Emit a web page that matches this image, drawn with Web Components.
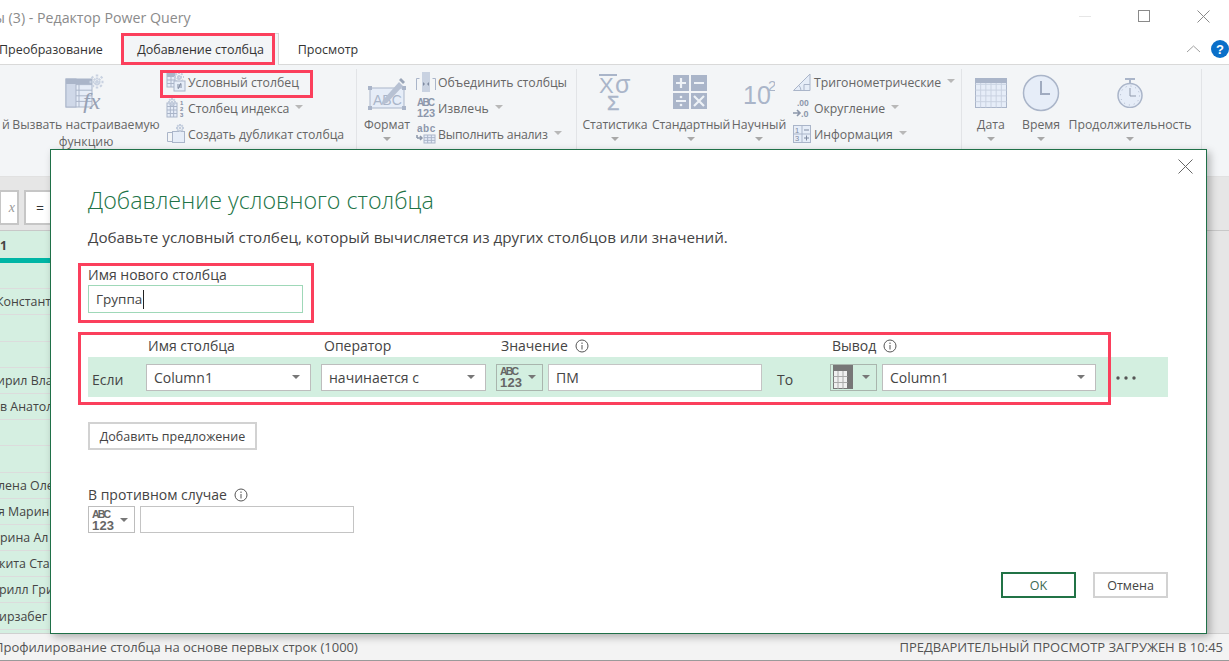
<!DOCTYPE html>
<html lang="ru"><head><meta charset="utf-8"><title>Редактор Power Query</title>
<style>
html,body{margin:0;padding:0;width:1229px;height:661px;overflow:hidden;background:#fff}
body{font-family:"Open Sans","Noto Sans",sans-serif}
</style></head><body>
<pq-app>
  <pq-titlebar>ы (3) - Редактор Power Query</pq-titlebar>
  <pq-tabs>
    <pq-tab style="width:122px;justify-content:flex-start;text-indent:-1px">Преобразование</pq-tab>
    <pq-tab active style="width:157px">Добавление столбца</pq-tab>
    <pq-tab style="width:98px">Просмотр</pq-tab>
  </pq-tabs>
  <pq-ribbon>
    <pq-group style="width:357px;padding-left:0">
      <pq-large style="width:12px;justify-content:flex-start" noicon>й</pq-large>
      <pq-large style="width:148px" icon="fx">Вызвать настраиваемую функцию</pq-large>
      <pq-col style="margin-left:4px">
        <pq-small icon="cond">Условный столбец</pq-small>
        <pq-small icon="index" caret>Столбец индекса</pq-small>
        <pq-small icon="dup">Создать дубликат столбца</pq-small>
      </pq-col>
    </pq-group>
    <pq-group style="width:220px;padding-left:5px">
      <pq-large style="width:50px" icon="format" caret>Формат</pq-large>
      <pq-col style="margin-left:2px">
        <pq-small icon="merge">Объединить столбцы</pq-small>
        <pq-small icon="extract" caret>Извлечь</pq-small>
        <pq-small icon="parse" caret style="letter-spacing:-.22px">Выполнить анализ</pq-small>
      </pq-col>
    </pq-group>
    <pq-group style="width:385px;padding-left:5px">
      <pq-large style="width:66px;letter-spacing:-.15px" icon="stat" caret>Статистика</pq-large>
      <pq-large style="width:82px;margin-left:2px;letter-spacing:-.18px" icon="calc" caret>Стандартный</pq-large>
      <pq-large style="width:58px;margin-left:-2px" icon="sci" caret>Научный</pq-large>
      <pq-col style="margin-left:2px">
        <pq-small icon="trig" caret style="letter-spacing:-.05px">Тригонометрические</pq-small>
        <pq-small icon="round" caret>Округление</pq-small>
        <pq-small icon="info" caret>Информация</pq-small>
      </pq-col>
    </pq-group>
    <pq-group style="width:240px;padding-left:8px">
      <pq-large style="width:42px" icon="date" caret>Дата</pq-large>
      <pq-large style="width:50px;margin-left:4px" icon="time" caret>Время</pq-large>
      <pq-large style="width:124px;margin-left:2px" icon="dur" caret>Продолжительность</pq-large>
    </pq-group>
  </pq-ribbon>
  <pq-formula></pq-formula>
  <pq-grid>
    <pq-row head>1</pq-row>
    <pq-row></pq-row>
    <pq-row><span style="margin-left:-4px">Константин</span></pq-row>
    <pq-row></pq-row>
    <pq-row></pq-row>
    <pq-row><span style="margin-left:-3px">ирил Влад</span></pq-row>
    <pq-row>в Анатолий</pq-row>
    <pq-row></pq-row>
    <pq-row></pq-row>
    <pq-row><span style="margin-left:-2px">лена Олег</span></pq-row>
    <pq-row><span style="margin-left:-2px">я Марина</span></pq-row>
    <pq-row>рина Ал</pq-row>
    <pq-row><span style="margin-left:-1px">кита Стан</span></pq-row>
    <pq-row><span style="margin-left:-1px">рилл Гри</span></pq-row>
    <pq-row><span style="margin-left:-1px">ирзабег С</span></pq-row>
  </pq-grid>
  <pq-status>
    <span>Профилирование столбца на основе первых строк (1000)</span>
    <span slot="right">ПРЕДВАРИТЕЛЬНЫЙ ПРОСМОТР ЗАГРУЖЕН В 10:45</span>
  </pq-status>

  <pq-dialog>
    <pq-heading>Добавление условного столбца</pq-heading>
    <pq-text>Добавьте условный столбец, который вычисляется из других столбцов или значений.</pq-text>
    <pq-newcol label="Имя нового столбца" value="Группа"></pq-newcol>
    <pq-clause></pq-clause>
    <pq-button style="width:169px;margin-top:25px">Добавить предложение</pq-button>
    <pq-else></pq-else>
    <pq-footer>
      <pq-button primary style="width:75px;height:26px">OK</pq-button>
      <pq-button style="width:75px;height:26px">Отмена</pq-button>
    </pq-footer>
  </pq-dialog>

  <pq-mark style="left:121px;top:33px;width:148px;height:26px"></pq-mark>
  <pq-mark style="left:160px;top:70px;width:147px;height:22px"></pq-mark>
  <pq-mark style="left:78px;top:263px;width:230px;height:54px"></pq-mark>
  <pq-mark style="left:78px;top:332px;width:1027px;height:67px"></pq-mark>
</pq-app>
<script>
const B='#aab5c9',L='#e6edf8',M='#cfd8e8',G='#8f99ab';
const tbl=(x,y,w,h,c,r,ln=B)=>{let s=`<rect x="${x}" y="${y}" width="${w}" height="${h}" fill="${L}" stroke="${B}"/>`;for(let i=1;i<c;i++){const p=x+i*w/c;s+=`<path d="M${p} ${y}V${y+h}" stroke="${ln}"/>`}for(let i=1;i<r;i++){const p=y+i*h/r;s+=`<path d="M${x} ${p}H${x+w}" stroke="${ln}"/>`}return s};
const spark=(cx,cy,r,c='#c3cddd',sw=2)=>{let s='';for(let a=0;a<4;a++){const t=a*Math.PI/4,dx=(r*Math.cos(t)).toFixed(1),dy=(r*Math.sin(t)).toFixed(1);s+=`<path d="M${cx-dx} ${cy-dy}L${cx+ +dx} ${cy+ +dy}" stroke="${c}" stroke-width="${sw}" stroke-dasharray="2 1"/>`}return s};
const t=(x,y,sz,s,ex='')=>`<text x="${x}" y="${y}" font-size="${sz}" font-family="'Liberation Sans',sans-serif" ${ex}>${s}</text>`;
const ICONS={
 fx:[44,40,`${tbl(2,6,26,28,2,5)}<rect x="2" y="6" width="10" height="28" fill="${M}" stroke="${B}"/><rect x="2" y="6" width="26" height="5" fill="${B}"/>${spark(33,9,7.5,'#c9d2e1',2.5)}<text x="19" y="36" font-size="24" font-style="italic" font-family="'Liberation Serif',serif" fill="#97a1b4">fx</text>`],
 format:[38,36,`<rect x="2" y="13" width="34" height="20" fill="${L}" stroke="${B}"/><g fill="${B}"><rect x="0" y="11" width="4" height="4"/><rect x="34" y="11" width="4" height="4"/><rect x="0" y="31" width="4" height="4"/><rect x="34" y="31" width="4" height="4"/></g>${t(5,30,14,'ABC',`fill="${B}"`)}<path d="M15 25L31 7l4 4-16 17-6 2z" fill="#b7c1d3"/><path d="M31 5l2-2 4 4-2 2z" fill="#9aa5b8"/>`],
 cond:[20,20,`${tbl(1,1,8,14,2,4)}<rect x="1" y="1" width="8" height="3" fill="${B}"/>${spark(13,5,5)}<rect x="8" y="9" width="11" height="10" fill="${L}" stroke="${B}"/><path d="M11 13h5M11 15h5M15 11l-3 6" stroke="#7f8aa0" fill="none"/>`],
 index:[20,20,`${tbl(1,5,10,14,3,4)}${spark(6,4,4)}<g font-size="6" font-family="'Liberation Sans',sans-serif" fill="#7f8aa0" font-weight="bold"><text x="14" y="7">1</text><text x="14" y="13">2</text><text x="14" y="19">3</text></g>`],
 dup:[20,20,`<path d="M1.500 8.500h7M1.500 8.500v9h7" fill="none" stroke="${B}"/><rect x="6.500" y="7.500" width="12" height="11" fill="${L}" stroke="${B}"/>${spark(14,4,4)}`],
 merge:[20,20,`<path d="M.5 18V6.500h3M19.500 18V6.500h-3" fill="none" stroke="${B}"/><rect x="6" y="0" width="8" height="20" fill="#c9d2e1"/><path d="M7 10l2 2-2 2zM13 10l-2 2 2 2z" fill="#7f8aa0"/>`],
 extract:[20,22,`${t(1,9,10,'ABC','fill="#8c97ab" font-weight="bold" textLength="18"')}${t(1,20,11,'123','fill="#8c97ab" font-weight="bold" textLength="18"')}`],
 parse:[20,20,`${t(1,8,10,'abc','fill="#8c97ab" font-weight="bold" textLength="18"')}<path d="M1 14h5m-2-2l2 2-2 2M1 11v3" fill="none" stroke="#8c97ab" stroke-width="1.500"/><g>${tbl(8,11,11,8,3,3)}</g>`],
 stat:[32,37,`<path d="M0 1h18" stroke="#aab5c9" stroke-width="2"/>${t(0,19,22,'X','fill="#aab5c9"')}${t(16,19,25,'σ','fill="#aab5c9"')}${t(8,36,20,'Σ','fill="#aab5c9" stroke="#aab5c9" stroke-width=".5"')}`],
 calc:[36,36,`<rect width="16" height="16" x="0" y="0" fill="${B}"/><rect width="16" height="16" x="18" y="0" fill="${B}"/><rect width="16" height="16" x="0" y="18" fill="${B}"/><rect width="16" height="16" x="18" y="18" fill="${B}"/><path d="M3 8h10M8 3v10M21 8h10M3 26h10M21 21l10 10M31 21l-10 10" stroke="#eef2f7" stroke-width="2.200"/><circle cx="8" cy="22" r="1.300" fill="#eef2f7"/><circle cx="8" cy="30" r="1.300" fill="#eef2f7"/>`],
 sci:[32,30,`${t(0,26,25,'10','fill="#aab5c9"')}${t(25,13,15,'2','fill="#aab5c9"')}`],
 trig:[18,18,`<path d="M.5 17.500L17 1v16.500z" fill="${L}" stroke="${B}"/><path d="M8 17.500a8 8 0 0 0-2-5M11 17.500v-6h6" fill="none" stroke="${B}"/>`],
 round:[18,20,`${t(4,8,8.500,'.00','fill="#8c97ab" font-weight="bold"')}<path d="M0 15h7m-3-3l3 3-3 3" fill="none" stroke="#8c97ab" stroke-width="1.600"/>${t(8,19,9,'.0','fill="#8c97ab" font-weight="bold"')}`],
 info:[18,18,`${tbl(.5,.5,17,17,2,2)}${t(2,8,7.500,'1','fill="#7f8aa0"')}${t(2,16,7.500,'3','fill="#7f8aa0"')}<path d="M11 5h5M11 13h5M13.500 10.500v5" stroke="#7f8aa0"/>`],
 date:[32,30,`${tbl(.5,.5,31,29,6,5,'#c9d2e1')}<rect x="0" y="0" width="32" height="5" fill="${B}"/>`],
 time:[38,38,`<circle cx="19" cy="19" r="17.500" fill="${L}" stroke="${B}" stroke-width="1.500"/><path d="M19 7v13h9" fill="none" stroke="#a0abc0" stroke-width="2"/>`],
 dur:[26,30,`<rect x="8" y="0" width="10" height="2" fill="${B}"/><rect x="12" y="2" width="2" height="4" fill="${B}"/><circle cx="13" cy="17.500" r="12" fill="${L}" stroke="${B}" stroke-width="1.500"/><circle cx="13" cy="17.500" r="9.500" fill="none" stroke="${B}" stroke-dasharray="1 4"/><path d="M13 10v8h6" fill="none" stroke="#8f99ab"/>`],
 tbl:[20,24,`<rect x=".5" y=".5" width="19" height="23" fill="#f0f0f0" stroke="#777"/><rect x="0" y="0" width="20" height="6" fill="#777"/><rect x="14" y="0" width="6" height="24" fill="#777"/><path d="M.5 11.500h14M.5 17.500h14M5 6v18M10 6v18" stroke="#aaa"/>`],
 abc:[24,22,`${t(1,9,10.500,'ABC','fill="#666" font-weight="bold" textLength="19"')}${t(1,21,13,'123','fill="#666" font-weight="bold" textLength="22"')}`]
};
function def(name,css,html,init){customElements.define(name,class extends HTMLElement{constructor(){super();this.attachShadow({mode:'open'}).innerHTML=`<style>${css}</style>${typeof html==='function'?html(this):html}`;}connectedCallback(){if(init)init(this)}})}
const caret=(c='#9a9a9a',w=9,h=5)=>`<svg width="${w}" height="${h}" viewBox="0 0 ${w} ${h}"><path d="M0 0h${w}L${w/2} ${h}z" fill="${c}"/></svg>`;
const UI='"Open Sans","Noto Sans",sans-serif';
def('pq-icon',':host{display:inline-flex;flex:none;line-height:0}','<span id="i"></span>',e=>{const [w,h,b]=ICONS[e.getAttribute('name')];e.shadowRoot.getElementById('i').innerHTML=`<svg width="${w}" height="${h}" viewBox="0 0 ${w} ${h}">${b}</svg>`});
def('pq-app',':host{display:flex;flex-direction:column;position:relative;width:1229px;height:661px;overflow:hidden;font-family:'+UI+';background:#fff}','<slot></slot>');
def('pq-titlebar',`:host{display:flex;align-items:center;height:33px;flex:none;color:#8b8b8b;font-size:14.2px;justify-content:space-between;overflow:hidden}
#t{margin-left:-6px;padding-top:1px;white-space:nowrap}#w{display:flex;align-items:center;height:33px;margin-right:19px;gap:46px}`,
`<span id="t"><slot></slot></span><span id="w"><svg width="13" height="13"><path d="M0 6.500h12" stroke="#e6e6e6"/></svg><svg width="13" height="13"><rect x=".5" y=".5" width="11" height="11" fill="none" stroke="#8a8a8a"/></svg><svg width="13" height="13"><path d="M.5.500l12 12M12.500.500l-12 12" stroke="#8a8a8a"/></svg></span>`);
def('pq-tabs',`:host{display:flex;height:32px;flex:none;position:relative;box-sizing:border-box;border-bottom:1px solid #d9d9d9;align-items:stretch}
#h{margin-left:auto;display:flex;align-items:center;gap:10px;height:32px}`,
`<slot></slot><div id="h"><svg width="15" height="8"><path d="M1 7l6.500-6 6.500 6" fill="none" stroke="#a0a0a0"/></svg><svg width="18" height="18"><circle cx="9" cy="9" r="9" fill="#0a6fc9"/><text x="9" y="14" text-anchor="middle" font-size="13" font-weight="bold" font-family="'Liberation Sans',sans-serif" fill="#fff">?</text></svg></div>`);
def('pq-tab',`:host{display:flex;align-items:center;justify-content:center;box-sizing:border-box;height:32px;font-size:12.5px;color:#333;white-space:nowrap}
:host([active]){background:#f3f5f7;border:1px solid #d6d6d6;border-bottom:none;margin-bottom:-1px}`,'<slot></slot>');
def('pq-ribbon',`:host{display:flex;height:112px;flex:none;background:#f3f5f7;box-sizing:border-box;border-bottom:1px solid #e1e1e1;padding-top:4px;color:#666;font-size:12.25px}`,'<slot></slot>');
def('pq-group',`:host{display:flex;box-sizing:border-box;height:83px;border-right:1px solid #e2e4e7;align-items:flex-start}`,'<slot></slot>');
def('pq-col',`:host{display:flex;flex-direction:column;flex:none}`,'<slot></slot>');
def('pq-large',`:host{display:flex;flex-direction:column;align-items:center;flex:none;text-align:center;line-height:17px}
#i{height:47px;display:flex;align-items:center;justify-content:center}#c{height:8px;display:flex;align-items:center;margin-top:2px}`,
e=>{const ic=e.getAttribute('icon');return `<div id="i">${ic?`<pq-icon name="${ic}"></pq-icon>`:''}</div><div><slot></slot></div>${e.hasAttribute('caret')?`<div id="c">${caret('#a8a8a8',8,4)}</div>`:''}`});
def('pq-small',`:host{display:flex;align-items:center;height:26px;white-space:nowrap;gap:2px}
#i{width:20px;display:flex;justify-content:center;margin-left:2px}#c{margin-left:4px;display:inline-flex;margin-top:-3px}`,
e=>`<span id="i"><pq-icon name="${e.getAttribute('icon')}"></pq-icon></span><span><slot></slot></span>${e.hasAttribute('caret')?`<span id="c">${caret('#b8b8b8',8,4)}</span>`:''}`);
def('pq-formula',`:host{display:flex;height:54px;flex:none;background:#e6e6e6;box-sizing:border-box;padding-top:13px;gap:5px;border-bottom:1px solid #c8c8c8}
.b{box-sizing:border-box;height:35px;background:#fff;border:2px solid #c6c6c6;display:flex;align-items:center;font-size:14px;color:#333}`,
`<div class="b" style="width:20px;margin-left:-1px;color:#999;justify-content:flex-end;padding-right:2px;font-style:italic;font-family:'Liberation Serif',serif">x</div><div class="b" style="width:32px;justify-content:center">=</div>`);
def('pq-grid',`:host{display:block;height:402px;flex:none;background:linear-gradient(#e6e6e6,#e6e6e6) 50px 0/1179px 100% no-repeat,#d5efe1;overflow:hidden}`,'<slot></slot>');
def('pq-row',`:host{display:flex;align-items:center;height:26.2px;box-sizing:border-box;border-bottom:1px solid #dcdcdc;font-size:12.4px;color:#444;width:50px;white-space:nowrap;overflow:hidden}
:host([head]){height:32px;border-bottom:5px solid #00b5a5;font-weight:bold;padding-top:2px}`,'<slot></slot>');
def('pq-status',`:host{display:flex;justify-content:space-between;align-items:center;flex:1;background:#f3f3f3;border-top:1px solid #d0d0d0;border-bottom:1px solid #9a9a9a;font-size:13px;color:#555;white-space:nowrap;padding-right:6px;overflow:hidden}
#l{margin-left:-6px}`,`<span id="l"><slot></slot></span><slot name="right"></slot>`);
def('pq-dialog',`:host{position:absolute;left:50px;top:149px;width:1157px;height:485px;box-sizing:border-box;background:#fff;border:1px solid #1f7048;box-shadow:3px 3px 8px rgba(0,0,0,.28);padding:35px 38px 0 37px;display:flex;flex-direction:column;align-items:flex-start;color:#444}
#x{position:absolute;right:13px;top:9px}`,`<svg id="x" width="15" height="15"><path d="M.5.500l14 14M14.500.500l-14 14" stroke="#666"/></svg><slot></slot>`);
def('pq-heading',`:host{display:block;font-size:23.25px;font-weight:300;color:#217346;line-height:30px;white-space:nowrap}`,'<slot></slot>');
def('pq-text',`:host{display:block;font-size:15.2px;margin-top:12px;line-height:20px;white-space:nowrap;color:#444}`,'<slot></slot>');
const info=`<svg width="14" height="14" style="margin-left:7px;flex:none" viewBox="0 0 14 14"><circle cx="7" cy="7" r="6" fill="none" stroke="#555"/><path d="M7 6v4.500M7 3.500v1.500" stroke="#555"/></svg>`;
def('pq-input',`:host{display:flex;align-items:center;box-sizing:border-box;height:27px;background:#fff;border:1px solid #c4c4c4;padding:0 7px;font-size:14px;color:#444;flex:none;white-space:nowrap}
:host([green]){border:1px solid #9fd8b8;height:28px;font-size:13.5px}#c{display:inline-block;width:1px;height:19px;background:#222;margin-left:1px}`,
e=>`<slot></slot>${e.hasAttribute('cursor')?'<span id="c"></span>':''}`);
def('pq-combo',`:host{display:flex;align-items:center;justify-content:space-between;box-sizing:border-box;height:27px;background:#fff;border:1px solid #bdbdbd;padding:0 10px 0 7px;font-size:14px;color:#444;flex:none;white-space:nowrap}`,
`<span><slot></slot></span>${caret('#777',8,4)}`);
def('pq-type',`:host{display:flex;align-items:center;justify-content:space-between;box-sizing:border-box;width:47px;height:27px;background:#fff;border:1px solid #bdbdbd;padding:0 6px 0 2px;flex:none}:host([filled]){background:#d3efe0;border-color:#a9b5ad}`,
e=>`<pq-icon name="${e.getAttribute('icon')||'abc'}"></pq-icon>${caret('#777',8,4)}`);
def('pq-newcol',`:host{display:flex;flex-direction:column;margin-top:18px;font-size:14px;color:#444;line-height:19px}
pq-input{width:215px;margin-top:1px;padding-left:7px}`,
e=>`<span>${e.getAttribute('label')}</span><pq-input green cursor>${e.getAttribute('value')}</pq-input>`);
def('pq-clause',`:host{display:block;width:1080px;margin-top:23px;font-size:14px;color:#444}
.h{display:flex;height:21px;line-height:19px;align-items:flex-start}.h>span{display:flex;align-items:center;white-space:nowrap}
.r{display:flex;align-items:center;height:40px;background:#d3efe0;padding:0 0 0 4px;box-sizing:border-box}`,
`<div class="h"><span style="margin-left:60px;width:176px">Имя столбца</span><span style="width:177px">Оператор</span><span style="width:331px">Значение ${info}</span><span>Вывод ${info}</span></div>
<div class="r"><span style="width:54px;padding-top:5px">Если</span><pq-combo style="width:165px">Column1</pq-combo><pq-combo style="width:165px;margin-left:10px">начинается с</pq-combo><pq-type filled style="margin-left:10px"></pq-type><pq-input style="width:214px;margin-left:5px">ПМ</pq-input><span style="width:53px;margin-left:15px;padding-top:5px">То</span><pq-type filled icon="tbl"></pq-type><pq-combo style="width:214px;margin-left:5px">Column1</pq-combo><svg width="20" height="4" style="margin-left:20px;margin-top:2px"><g fill="#555"><circle cx="2" cy="2" r="1.700"/><circle cx="10" cy="2" r="1.700"/><circle cx="18" cy="2" r="1.700"/></g></svg></div>`);
def('pq-button',`:host{display:flex;align-items:center;justify-content:center;box-sizing:border-box;height:28px;border:2px solid #d2d2d2;background:#fff;font-size:12.5px;color:#444;flex:none;white-space:nowrap}
:host([primary]){border-color:#217346;color:#3d6a52}`,'<slot></slot>');
def('pq-else',`:host{display:block;margin-top:34px;font-size:14px;color:#444;line-height:20px}
.h{display:flex;align-items:center;height:22px}.r{display:flex;gap:5px;align-items:center}`,
`<div class="h">В противном случае ${info}</div><div class="r"><pq-type></pq-type><pq-input style="width:214px"></pq-input></div>`);
def('pq-footer',`:host{display:flex;gap:17px;position:absolute;right:38px;top:422px}`,'<slot></slot>');
def('pq-mark',`:host{position:absolute;display:block;border:3px solid #fb3f5c;pointer-events:none}`,'');
</script>
</body></html>
